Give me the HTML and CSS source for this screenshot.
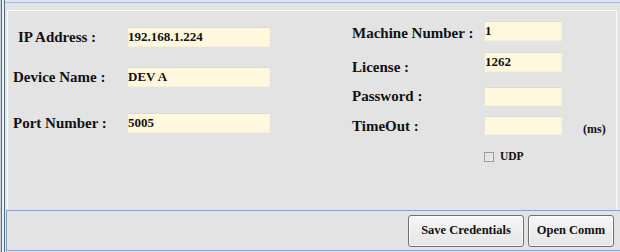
FILE: index.html
```html
<!DOCTYPE html>
<html>
<head>
<meta charset="utf-8">
<link rel="stylesheet" href="styles.css">
</head>
<body>
<div class="frame">
  <div class="topline"></div>
  <div class="upper">
    <div class="col col-left">
      <div class="row">
        <label class="lbl lbl-ip">IP Address :</label>
        <input class="field field-wide" value="192.168.1.224" readonly>
      </div>
      <div class="row row-device">
        <label class="lbl">Device Name :</label>
        <input class="field field-wide" value="DEV A" readonly>
      </div>
      <div class="row row-port">
        <label class="lbl">Port Number :</label>
        <input class="field field-wide" value="5005" readonly>
      </div>
    </div>
    <div class="col col-right">
      <div class="rrow">
        <label class="rlbl rlbl-machine">Machine Number :</label>
        <input class="field field-narrow" value="1" readonly>
      </div>
      <div class="rrow rrow-license">
        <label class="rlbl rlbl-license">License :</label>
        <input class="field field-narrow" value="1262" readonly>
      </div>
      <div class="rrow rrow-password">
        <label class="rlbl rlbl-password">Password :</label>
        <input class="field field-narrow field-short" type="password" value="" readonly>
      </div>
      <div class="rrow rrow-timeout">
        <label class="rlbl rlbl-timeout">TimeOut :</label>
        <input class="field field-narrow field-short" value="" readonly>
        <span class="unit">(ms)</span>
      </div>
      <div class="udp-row">
        <input type="checkbox" class="check" id="udp">
        <label class="udp-label" for="udp">UDP</label>
      </div>
    </div>
  </div>
  <div class="bottom">
    <button class="btn btn-save">Save Credentials</button>
    <button class="btn btn-open">Open Comm</button>
  </div>
</div>
</body>
</html>
```

FILE: styles.css
```css
html, body {
  margin: 0;
  padding: 0;
  background: #ececec;
}

.frame {
  width: 620px;
  height: 252px;
  box-sizing: border-box;
  padding-left: 5px;
  display: flex;
  flex-direction: column;
  background: #e4e4e4;
  box-shadow: inset 1px 0 #c9d2da, inset 2px 0 #4f6f84, inset 4px 0 #eef2f5, inset 5px 0 #4f6f84;
  font-family: "Liberation Serif", "Times New Roman", serif;
  font-weight: bold;
  color: #111;
}

.topline {
  margin-top: 2px;
  height: 1px;
  background: #a9bde2;
}

.upper {
  margin: 7px 0 0 2px;
  width: 610px;
  height: 200px;
  box-sizing: border-box;
  border-top: 1px solid #ffffff;
  border-left: 1px solid #ffffff;
  border-right: 1px solid #f8f8f8;
  background: #e3e3e3;
  display: flex;
}

.col {
  display: flex;
  flex-direction: column;
  box-sizing: border-box;
}

.col-left {
  width: 344px;
  padding: 16px 0 0 5px;
}

.row {
  display: flex;
  align-items: center;
  height: 20px;
}

.row-device { margin-top: 20px; }
.row-port { margin-top: 26px; }

.lbl, .rlbl {
  font-size: 15px;
  line-height: 17px;
  white-space: nowrap;
}

.lbl { width: 114px; }
.lbl-ip { width: 109px; padding-left: 5px; }

.field {
  height: 20px;
  box-sizing: border-box;
  margin: 0;
  padding: 2px 0 3px 0;
  background: #fff8dc;
  border: 1px solid #f3f0e4;
  border-top-color: #dcdcd6;
  border-left-color: #e7e5dc;
  font-family: "Liberation Serif", "Times New Roman", serif;
  font-weight: bold;
  font-size: 13px;
  color: #111;
  outline: none;
}

.field-wide { width: 143px; }
.field-narrow { width: 78px; }
.field-short { height: 19px; }

.col-right {
  padding-top: 10px;
}

.rrow {
  display: flex;
  align-items: flex-start;
  height: 20px;
}

.rlbl { width: 132px; }

.rlbl-machine { margin-top: 4px; }
.rlbl-license { margin-top: 7px; }
.rlbl-password { margin-top: 1px; }
.rlbl-timeout { margin-top: 2px; }

.rrow-license { margin-top: 11px; }
.rrow-password { margin-top: 15px; height: 19px; }
.rrow-timeout { margin-top: 10px; height: 19px; }

.unit {
  margin: 6px 0 0 21px;
  font-size: 12px;
  line-height: 14px;
}

.udp-row {
  margin-top: 16px;
  padding-left: 132px;
  display: flex;
  align-items: center;
  height: 11px;
}

.check {
  appearance: none;
  -webkit-appearance: none;
  margin: 0;
  width: 10px;
  height: 10px;
  box-sizing: border-box;
  border: 1px solid #9a9a9a;
  background: linear-gradient(135deg, #d6d6d6, #f2f2f2);
  box-shadow: inset 0 0 0 1px #eaeaea;
}

.udp-label {
  margin-left: 6px;
  font-size: 11.5px;
  line-height: 13px;
}

.bottom {
  margin-left: 1px;
  height: 41px;
  box-sizing: border-box;
  border: 1px solid #8aa2c8;
  border-right: none;
  background: #e3e3e3;
  display: flex;
  justify-content: flex-end;
  align-items: center;
  gap: 4px;
  padding-right: 6px;
}

.btn {
  height: 32px;
  margin: 0;
  padding: 0;
  border: 1px solid #707070;
  border-radius: 3px;
  background: linear-gradient(#f6f6f6, #e5e5e5);
  box-shadow: inset 0 0 0 1px #fbfbfb;
  font-family: "Liberation Serif", "Times New Roman", serif;
  font-weight: bold;
  font-size: 12.5px;
  color: #111;
}

.btn-save { width: 116px; }
.btn-open { width: 86px; }
```
